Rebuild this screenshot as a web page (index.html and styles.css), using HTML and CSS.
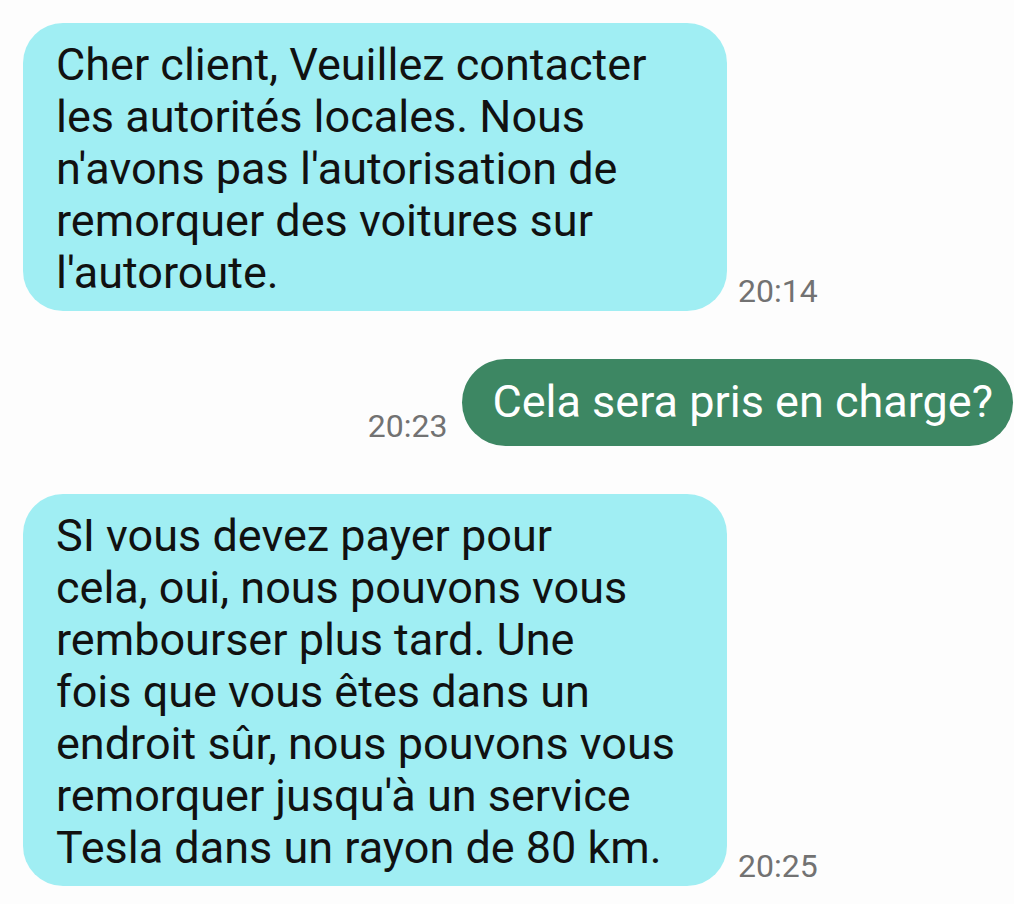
FILE: index.html
```html
<!DOCTYPE html>
<html lang="fr">
<head>
<meta charset="utf-8">
<link rel="stylesheet" href="styles.css">
</head>
<body>
<div class="chat">
  <div class="row row-in">
    <div class="bubble bubble-in">Cher client, Veuillez contacter<br>les autorités locales. Nous<br>n'avons pas l'autorisation de<br>remorquer des voitures sur<br>l'autoroute.</div>
    <span class="time time-in">20:14</span>
  </div>
  <div class="row row-out">
    <span class="time time-out">20:23</span>
    <div class="bubble bubble-out">Cela sera pris en charge?</div>
  </div>
  <div class="row row-in">
    <div class="bubble bubble-in">SI vous devez payer pour<br>cela, oui, nous pouvons vous<br>rembourser plus tard. Une<br>fois que vous êtes dans un<br>endroit sûr, nous pouvons vous<br>remorquer jusqu'à un service<br>Tesla dans un rayon de 80 km.</div>
    <span class="time time-in">20:25</span>
  </div>
</div>
</body>
</html>
```

FILE: styles.css
```css
html, body {
  margin: 0;
  padding: 0;
  background: #fdfdfd;
}
body {
  font-family: Roboto, "Noto Sans", sans-serif;
  width: 1014px;
  height: 904px;
  overflow: hidden;
}
.chat {
  display: flex;
  flex-direction: column;
  gap: 48px;
  padding: 23px 1px 0 23px;
}
.row {
  display: flex;
  align-items: flex-end;
}
.row-out {
  justify-content: flex-end;
}
.bubble {
  font-size: 45px;
  line-height: 52px;
}
.bubble-in {
  box-sizing: border-box;
  width: 704px;
  background: #a0eef3;
  color: #111;
  border-radius: 40px;
  padding: 16px 20px 12px 33px;
  white-space: nowrap;
}
.bubble-out {
  background: #3d8763;
  color: #fff;
  border-radius: 44px;
  padding: 17px 20px 18px 30px;
  white-space: nowrap;
}
.time {
  font-size: 32px;
  line-height: 32px;
  color: #727272;
  margin-bottom: 4px;
}
.time-in {
  margin-left: 11px;
}
.time-out {
  margin-right: 15px;
}
```
